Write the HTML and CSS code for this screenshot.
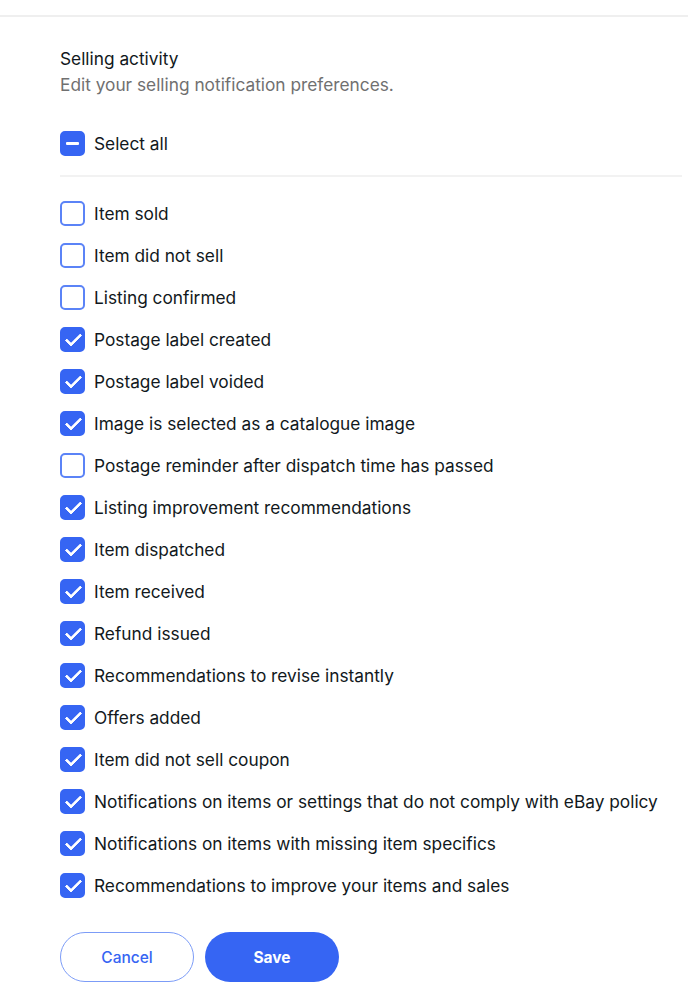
FILE: index.html
```html
<!DOCTYPE html>
<html lang="en">
<head>
    <meta charset="UTF-8">
    <meta name="viewport" content="width=device-width, initial-scale=1.0">
    <link rel="stylesheet" href="styles.css">
    <title>Selling activity</title>
</head>
<body>
    <div class="topbar"></div>

    <form class="prefs">
        <h2>Selling activity</h2>
        <p class="sub">Edit your selling notification preferences.</p>

        <label class="row select-all">
            <span class="box mixed"></span>
            Select all
        </label>

        <div class="list">
            <label class="row"><span class="box"></span>Item sold</label>
            <label class="row"><span class="box"></span>Item did not sell</label>
            <label class="row"><span class="box"></span>Listing confirmed</label>
            <label class="row"><span class="box on"></span>Postage label created</label>
            <label class="row"><span class="box on"></span>Postage label voided</label>
            <label class="row"><span class="box on"></span>Image is selected as a catalogue image</label>
            <label class="row"><span class="box"></span>Postage reminder after dispatch time has passed</label>
            <label class="row"><span class="box on"></span>Listing improvement recommendations</label>
            <label class="row"><span class="box on"></span>Item dispatched</label>
            <label class="row"><span class="box on"></span>Item received</label>
            <label class="row"><span class="box on"></span>Refund issued</label>
            <label class="row"><span class="box on"></span>Recommendations to revise instantly</label>
            <label class="row"><span class="box on"></span>Offers added</label>
            <label class="row"><span class="box on"></span>Item did not sell coupon</label>
            <label class="row"><span class="box on"></span>Notifications on items or settings that do not comply with eBay policy</label>
            <label class="row"><span class="box on"></span>Notifications on items with missing item specifics</label>
            <label class="row"><span class="box on"></span>Recommendations to improve your items and sales</label>
        </div>

        <div class="actions">
            <button type="button" class="btn secondary">Cancel</button>
            <button type="button" class="btn primary">Save</button>
        </div>
    </form>
</body>
</html>
```

FILE: styles.css
```css
body {
    margin: 0;
    font-family: Inter, 'Liberation Sans', sans-serif;
    color: #111820;
    background-color: #fff;
}

.topbar {
    height: 15px;
    border-bottom: 2px solid #efefef;
}

.prefs {
    padding: 30px 6px 0 60px;
}

h2 {
    font-size: 17.3px;
    font-weight: 400;
    margin: 0;
    line-height: 24px;
}

.sub {
    font-size: 17.3px;
    color: #707070;
    margin: 2px 0 0;
    line-height: 24px;
}

.row {
    display: flex;
    align-items: center;
    gap: 9px;
    height: 42px;
    font-size: 17.3px;
}

.select-all {
    margin-top: 25px;
    border-bottom: 2px solid #f2f2f2;
    padding-bottom: 11px;
    box-sizing: content-box;
}

.list {
    padding-top: 15px;
}

.box {
    width: 21px;
    height: 21px;
    border: 2px solid #5b83f7;
    border-radius: 5px;
    flex: none;
    position: relative;
}

.box.on,
.box.mixed {
    background-color: #3665f3;
    border-color: #3665f3;
}

.box.on::after {
    content: "";
    position: absolute;
    left: 7px;
    top: 1px;
    width: 6px;
    height: 13px;
    border: solid #fff;
    border-width: 0 3px 3px 0;
    border-radius: 1px;
    transform: rotate(45deg);
}

.box.mixed::after {
    content: "";
    position: absolute;
    left: 4px;
    right: 4px;
    top: 9px;
    height: 3px;
    background-color: #fff;
    border-radius: 1px;
}

.actions {
    display: flex;
    gap: 11px;
    padding-top: 26px;
}

.btn {
    width: 134px;
    height: 50px;
    border-radius: 25px;
    font-family: Inter, 'Liberation Sans', sans-serif;
    font-size: 15.5px;
    cursor: pointer;
}

.secondary {
    background-color: #fff;
    border: 1px solid #7c9cf7;
    color: #3665f3;
    font-weight: 500;
}

.primary {
    background-color: #3665f3;
    border: none;
    color: #fff;
    font-weight: 700;
}
```
